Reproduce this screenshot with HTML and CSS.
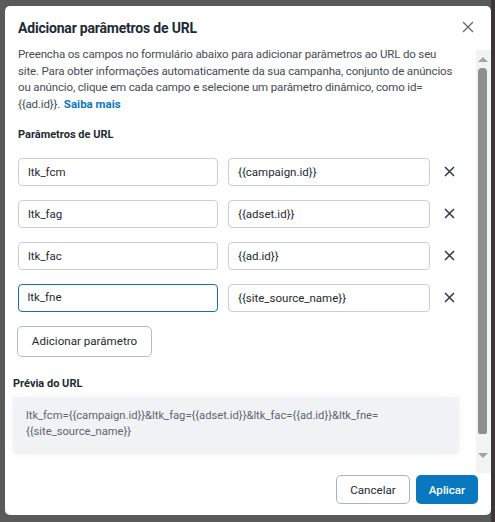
FILE: index.html
```html
<!DOCTYPE html>
<html lang="pt-BR">
<head>
<meta charset="utf-8">
<title>Adicionar parâmetros de URL</title>
<link rel="stylesheet" href="styles.css">
</head>
<body>
<div class="backdrop">
  <div class="modal">
    <div class="modal-header">
      <h1 class="title">Adicionar parâmetros de URL</h1>
      <button class="close" aria-label="Fechar">
        <svg width="12" height="12" viewBox="0 0 12 12"><path d="M1 1L11 11M11 1L1 11" stroke="#65676b" stroke-width="1.3" fill="none"/></svg>
      </button>
    </div>
    <div class="modal-body">
      <div class="content">
        <p class="desc">Preencha os campos no formulário abaixo para adicionar parâmetros ao URL do seu site. Para obter informações automaticamente da sua campanha, conjunto de anúncios ou anúncio, clique em cada campo e selecione um parâmetro dinâmico, como id= {{ad.id}}. <a class="link" href="#">Saiba mais</a></p>
        <div class="section-label">Parâmetros de URL</div>
        <div class="rows">
          <div class="row">
            <div class="input key">ltk_fcm</div>
            <div class="input val">{{campaign.id}}</div>
            <span class="remove"><svg width="11" height="11" viewBox="0 0 11 11"><path d="M1 1L10 10M10 1L1 10" stroke="#2f3a42" stroke-width="1.5" fill="none"/></svg></span>
          </div>
          <div class="row">
            <div class="input key">ltk_fag</div>
            <div class="input val">{{adset.id}}</div>
            <span class="remove"><svg width="11" height="11" viewBox="0 0 11 11"><path d="M1 1L10 10M10 1L1 10" stroke="#2f3a42" stroke-width="1.5" fill="none"/></svg></span>
          </div>
          <div class="row">
            <div class="input key">ltk_fac</div>
            <div class="input val">{{ad.id}}</div>
            <span class="remove"><svg width="11" height="11" viewBox="0 0 11 11"><path d="M1 1L10 10M10 1L1 10" stroke="#2f3a42" stroke-width="1.5" fill="none"/></svg></span>
          </div>
          <div class="row">
            <div class="input key focused">ltk_fne</div>
            <div class="input val">{{site_source_name}}</div>
            <span class="remove"><svg width="11" height="11" viewBox="0 0 11 11"><path d="M1 1L10 10M10 1L1 10" stroke="#2f3a42" stroke-width="1.5" fill="none"/></svg></span>
          </div>
        </div>
        <button class="btn add">Adicionar parâmetro</button>
        <div class="preview-section">
          <div class="preview-label">Prévia do URL</div>
          <div class="preview-box">ltk_fcm={{campaign.id}}&amp;ltk_fag={{adset.id}}&amp;ltk_fac={{ad.id}}&amp;ltk_fne=<br>{{site_source_name}}</div>
        </div>
      </div>
      <div class="scrollbar">
        <span class="arrow up"></span>
        <span class="thumb"></span>
        <span class="arrow down"></span>
      </div>
    </div>
    <div class="modal-footer">
      <button class="btn cancel">Cancelar</button>
      <button class="btn primary">Aplicar</button>
    </div>
  </div>
  <div class="page-strip"></div>
</div>
</body>
</html>
```
FILE: styles.css
```css
* { box-sizing: border-box; }
html, body { margin: 0; padding: 0; }
body {
  width: 495px;
  height: 522px;
  overflow: hidden;
  background: #5a5a5a;
  font-family: Roboto, "Liberation Sans", Arial, sans-serif;
  color: #1c2b33;
}
.backdrop {
  display: flex;
  height: 522px;
  padding: 6px 0 0 5px;
}
.page-strip {
  width: 4px;
  height: 522px;
  margin-top: -6px;
  background: #3b3634;
}
.modal {
  width: 486px;
  height: 509px;
  background: #fff;
  border-radius: 5px;
  display: flex;
  flex-direction: column;
  flex: none;
}
.modal-header {
  height: 40px;
  display: flex;
  align-items: flex-start;
  justify-content: space-between;
  padding: 13px 17px 0 13px;
}
.title {
  margin: 0;
  font-size: 14px;
  letter-spacing: -0.2px;
  line-height: 18px;
  font-weight: 700;
  color: #1c2b33;
}
.close {
  border: 0;
  background: none;
  padding: 0;
  margin-top: 2px;
  width: 12px;
  height: 12px;
  display: flex;
}
.modal-body {
  flex: 1;
  display: flex;
  min-height: 0;
}
.content {
  flex: 1;
  padding: 0 0 0 13px;
}
.desc {
  margin: 0;
  font-size: 11.5px;
  letter-spacing: -0.15px;
  line-height: 16.7px;
  color: #444c54;
  width: 440px;
}
.link {
  color: #0a78be;
  font-weight: 700;
  letter-spacing: 0;
  margin-left: 1px;
  text-decoration: none;
}
.section-label {
  margin-top: 14px;
  font-size: 11px;
  line-height: 16px;
  font-weight: 700;
  color: #1c2b33;
}
.rows {
  margin-top: 15px;
  display: flex;
  flex-direction: column;
  gap: 14px;
}
.row {
  display: flex;
  align-items: center;
  gap: 10px;
}
.input {
  height: 28px;
  border: 1px solid #c9ced3;
  border-radius: 4px;
  padding: 0 9px;
  font-size: 11.5px;
  line-height: 26px;
  color: #1c2b33;
  background: #fff;
}
.input.key { width: 200px; }
.input.val { width: 202px; }
.input.focused {
  border: 1.5px solid #1b6fb0;
  padding: 0 8.5px;
  line-height: 25px;
}
.remove {
  width: 18px;
  display: flex;
  justify-content: center;
}
.btn {
  font-family: Roboto, "Liberation Sans", Arial, sans-serif;
  font-size: 11.6px;
  border-radius: 5px;
  background: #fff;
  color: #1c2b33;
  cursor: pointer;
}
.add {
  margin: 14px 0 0 -1px;
  height: 31px;
  width: 135px;
  border: 1px solid #b4bcc3;
  padding: 0;
}
.preview-section {
  margin: 19px 0 0 -5px;
  width: 446px;
}
.preview-label {
  font-size: 11px;
  line-height: 16px;
  font-weight: 700;
  color: #1c2b33;
}
.preview-box {
  margin-top: 5px;
  background: #f0f2f5;
  border-radius: 4px;
  padding: 11px 13px 14px;
  font-size: 11.2px;
  line-height: 16px;
  color: #5c6770;
  box-shadow: 0 0 12px rgba(0, 0, 0, 0.04);
}
.scrollbar {
  width: 15px;
  padding: 4px 3px 0 1px;
  display: flex;
  flex-direction: column;
  align-items: center;
  height: 423px;
  margin-top: 4px;
  background: #f3f3f3;
}
.arrow {
  width: 0;
  height: 0;
  border-left: 5px solid transparent;
  border-right: 5px solid transparent;
}
.arrow.up {
  border-bottom: 5px solid #a3a3a3;
  margin-top: 3px;
}
.thumb {
  margin-top: 6px;
  width: 9px;
  height: 366px;
  background: #8e8e8e;
  border-radius: 4px 4px 2px 2px;
}
.arrow.down {
  border-top: 5px solid #a3a3a3;
  margin-top: 19px;
}
.modal-footer {
  height: 49px;
  display: flex;
  justify-content: flex-end;
  align-items: flex-start;
  gap: 6px;
  padding: 9px 13px 0 0;
}
.cancel {
  height: 29px;
  width: 74px;
  border: 1px solid #aab2b9;
  padding: 0;
}
.primary {
  height: 29px;
  width: 62px;
  border: 0;
  background: #0a78be;
  color: #fff;
  padding: 0;
  font-weight: 500;
}
```
